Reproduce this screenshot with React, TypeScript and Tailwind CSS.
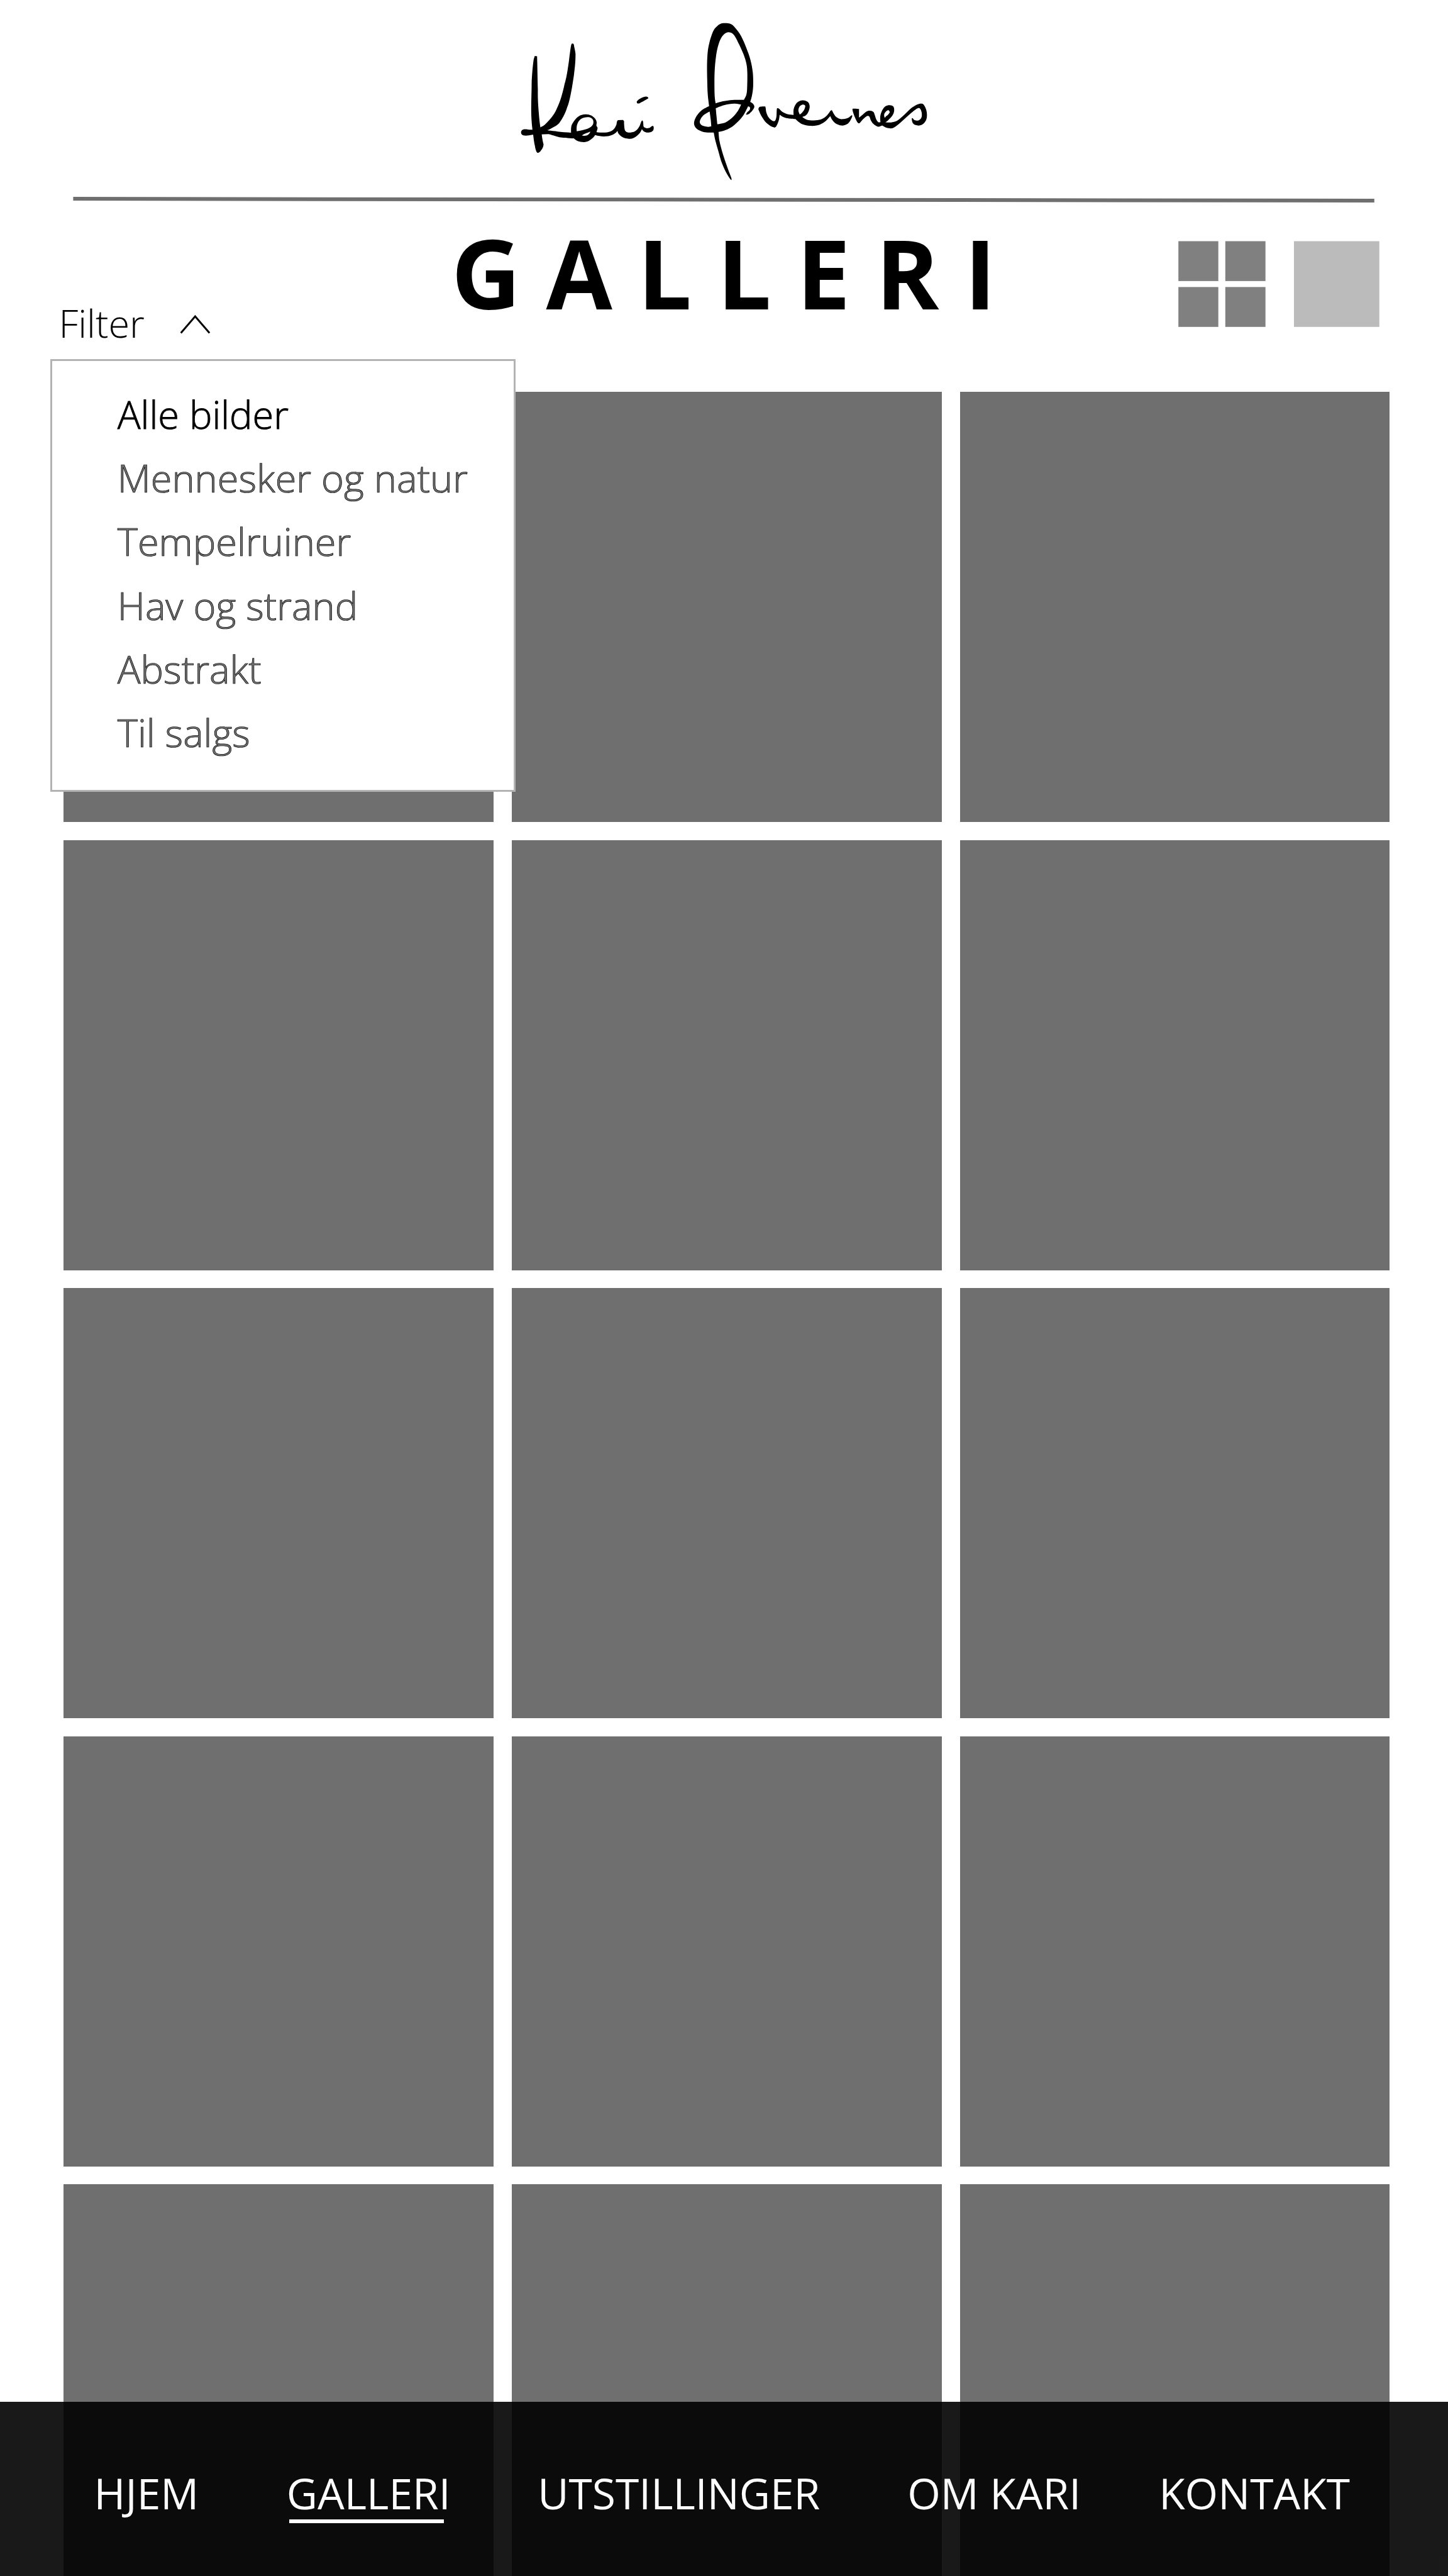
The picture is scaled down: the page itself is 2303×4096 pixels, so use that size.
type Pt = [number, number];

// Smooth closed outline through the points; a repeated point marks a sharp corner.
function outline(pts: Pt[]): string {
  const n = pts.length;
  let d = `M${pts[0][0]} ${pts[0][1]}`;
  for (let i = 0; i < n; i++) {
    const a = pts[(i - 1 + n) % n];
    const p = pts[i];
    const q = pts[(i + 1) % n];
    const b = pts[(i + 2) % n];
    if (p[0] === q[0] && p[1] === q[1]) continue;
    d += `C${p[0] + (q[0] - a[0]) / 6} ${p[1] + (q[1] - a[1]) / 6} ${q[0] - (b[0] - p[0]) / 6} ${q[1] - (b[1] - p[1]) / 6} ${q[0]} ${q[1]}`;
  }
  return d + "Z";
}

const loop: Pt[][] = [
  [[319, 1073], [290, 1022], [265, 958], [248, 893], [230, 822], [220, 768], [220, 768], [185, 768], [150, 761], [120, 743], [105, 710], [118, 665], [150, 624], [193, 597], [193, 597], [185, 520], [182, 430], [181, 330], [185, 245], [195, 185], [207, 140], [225, 97], [255, 67], [285, 60], [322, 67], [350, 97], [380, 145], [410, 220], [434, 297], [448, 380], [450, 470], [443, 530], [433, 570], [433, 570], [450, 583], [457, 603], [445, 627], [425, 648], [408, 653], [408, 653], [415, 638], [430, 622], [431, 605], [420, 600], [420, 600], [395, 653], [360, 699], [320, 736], [280, 756], [248, 764], [248, 764], [253, 820], [265, 875], [280, 930], [303, 1005], [323, 1064]],
  [[231, 579], [231, 579], [225, 520], [225, 380], [234, 270], [248, 198], [270, 145], [300, 120], [335, 133], [367, 195], [395, 265], [411, 325], [416, 380], [415, 480], [410, 525], [396, 557], [396, 557], [330, 558], [280, 565]],
  [[232, 611], [232, 611], [280, 591], [340, 581], [380, 587], [380, 587], [360, 630], [330, 670], [290, 702], [241, 715], [241, 715], [236, 660]],
  [[196, 632], [196, 632], [160, 657], [140, 690], [142, 712], [160, 726], [188, 732], [206, 728], [206, 728], [202, 680]],
];

const verOutline: Pt[][] = [
  [[481, 615], [490, 602], [518, 600], [523, 610], [527, 638], [540, 670], [562, 692], [578, 692], [586, 665], [588, 620], [592, 611], [602, 615], [620, 634], [650, 649], [686, 654], [686, 654], [687, 615], [705, 576], [738, 560], [770, 571], [780, 600], [772, 635], [757, 658], [737, 668], [737, 668], [765, 686], [805, 690], [845, 684], [872, 667], [890, 645], [902, 627], [910, 625], [918, 642], [935, 668], [960, 681], [990, 679], [1010, 670], [1025, 657], [1028, 665], [1015, 695], [995, 716], [965, 723], [930, 708], [910, 684], [900, 662], [900, 662], [880, 687], [855, 708], [820, 723], [780, 725], [740, 716], [715, 699], [697, 681], [697, 681], [660, 678], [630, 670], [605, 653], [605, 653], [600, 688], [588, 722], [578, 735], [560, 731], [525, 703], [500, 665], [485, 630]],
  [[722, 652], [722, 652], [714, 625], [722, 599], [740, 587], [754, 595], [748, 621], [735, 640]],
];

const nesOutline: Pt[][] = [
  [[1030, 622], [1037, 614], [1068, 616], [1068, 616], [1068, 672], [1068, 672], [1090, 652], [1112, 632], [1132, 627], [1152, 635], [1160, 655], [1168, 682], [1180, 701], [1193, 701], [1193, 701], [1192, 663], [1203, 625], [1222, 598], [1247, 591], [1268, 600], [1273, 628], [1262, 660], [1237, 690], [1222, 702], [1222, 702], [1255, 703], [1290, 692], [1320, 666], [1350, 634], [1380, 605], [1410, 586], [1438, 582], [1452, 600], [1463, 635], [1463, 675], [1450, 704], [1425, 722], [1398, 720], [1381, 705], [1376, 680], [1380, 675], [1392, 688], [1415, 690], [1432, 672], [1434, 642], [1425, 615], [1410, 612], [1380, 635], [1340, 674], [1300, 714], [1265, 740], [1230, 738], [1203, 723], [1203, 723], [1180, 731], [1155, 716], [1138, 692], [1128, 665], [1115, 662], [1100, 674], [1085, 690], [1070, 708], [1058, 701], [1042, 665]],
  [[1218, 672], [1215, 650], [1227, 630], [1240, 624], [1247, 637], [1238, 652], [1226, 663]],
];

function Signature() {
  return (
    <svg
      className="block h-[280px] w-[700px] shrink-0"
      viewBox="0 0 2850.5 1140"
      preserveAspectRatio="none"
      role="img"
      aria-label="Kari Øvernes"
    >
      <path d="M165 273L180 275C182 340 183 420 185 490C184 560 188 600 191 640C195 690 198 710 201 732L210 780C213 810 218 830 222 845C221 862 214 875 205 885C198 897 190 901 183 900C175 895 170 880 166 855C160 830 157 800 155 784L150 750C144 700 142 660 142 620C142 560 145 500 145 440C148 380 154 320 158 295Z" />
      <path d="M402 198C405 190 414 191 418 198C421 220 428 240 429 260C429 320 424 350 419 395C412 440 405 490 398 520C390 560 382 590 375 605C362 650 340 685 325 705C305 728 275 738 254 751L205 760L201 735C212 730 220 726 228 720C260 690 290 655 305 620C330 570 345 515 358 455C372 410 380 350 387 300C392 260 397 215 402 198Z" />
      <path d="M92 748C110 745 130 752 150 750L205 738L254 755C290 757 330 766 402 769L420 806C380 806 345 802 325 799C295 792 270 782 254 779L150 783C130 788 110 789 97 788C70 786 70 752 92 748Z" />
      <path
        fillRule="evenodd"
        d="M400 769C399 740 400 720 412 705C430 675 450 660 465 655C490 647 515 649 530 658C555 672 567 690 566 706L564 724L572 738C571 755 563 762 566 766C600 770 635 770 655 761C680 750 690 730 695 712C697 700 697 692 704 688L735 687C742 690 745 695 743 705C745 735 746 750 752 758C762 772 790 770 810 762C835 750 845 725 850 710C855 700 856 690 862 690C868 695 868 710 869 728C875 742 900 744 912 736C921 728 924 724 932 726C938 735 935 742 934 750C928 765 910 769 890 768C872 765 864 755 859 746C852 765 840 780 828 789C810 805 795 810 775 809C745 808 720 795 707 775C702 768 702 760 701 757C690 775 665 787 640 792C610 795 585 794 556 785C548 798 535 812 515 822C500 830 485 831 470 830C445 827 430 818 418 806ZM437 760C432 720 445 695 465 680C485 668 515 665 530 674C548 685 545 700 544 710C540 725 525 737 500 746C480 753 460 756 437 760ZM470 788C485 775 505 771 525 762C522 775 510 785 500 788C490 790 480 790 470 788Z"
      />
      <path d="M826 567C840 548 865 538 885 535C895 535 902 541 900 548C880 560 855 573 842 580C832 582 824 580 826 567Z" />
      <g transform="translate(1080 0) scale(1.1097 1)" fillRule="evenodd">
        <path d={loop.map(outline).join("")} />
        <path d={verOutline.map(outline).join("")} />
        <path d={nesOutline.map(outline).join("")} />
      </g>
    </svg>
  );
}

const categories = ["Alle bilder", "Mennesker og natur", "Tempelruiner", "Hav og strand", "Abstrakt", "Til salgs"];

function FilterMenu() {
  return (
    <ul className="absolute left-[80px] top-[571px] z-10 h-[688px] w-[740px] border-[3px] border-[#b3b3b3] bg-white pl-[103.8px] pt-[34px] text-[61.3px] font-light leading-[101.2px]">
      {categories.map((name, i) => (
        <li
          key={name}
          className={
            i === 0
              ? "whitespace-nowrap text-black [-webkit-text-stroke:0.9px_#000]"
              : "whitespace-nowrap text-[#707070] [-webkit-text-stroke:0.74px_#000]"
          }
        >
          {name}
        </li>
      ))}
    </ul>
  );
}

function ViewToggle() {
  return (
    <div className="mt-[60px] flex gap-[45px]">
      <svg className="block h-[137px] w-[139px]" viewBox="0 0 139 137" fill="#808080">
        <rect x="0.2" y="0.5" width="63.5" height="63.4" />
        <rect x="74.8" y="0.5" width="63.9" height="63.4" />
        <rect x="0.2" y="73.4" width="63.5" height="63.4" />
        <rect x="74.8" y="73.4" width="63.9" height="63.4" />
      </svg>
      <svg className="block h-[137px] w-[136px]" viewBox="0 0 136 137" fill="#bbbbbb">
        <rect x="0" y="0.5" width="135.8" height="136.3" />
      </svg>
    </div>
  );
}

const links = [
  { label: "HJEM", cls: "ml-[149.6px]" },
  { label: "GALLERI", cls: "ml-[139.6px]" },
  { label: "UTSTILLINGER", cls: "ml-[138.5px]" },
  { label: "OM KARI", cls: "ml-[138.9px]" },
  { label: "KONTAKT", cls: "ml-[123.9px]" },
];

export default function App() {
  return (
    <div className="relative flex h-[4096px] w-[2303px] flex-col overflow-hidden bg-white font-['Open_Sans',sans-serif] text-black">
      <header className="flex h-[312px] shrink-0 pl-[810.4px] pt-[22.1px]">
        <Signature />
      </header>
      <svg className="ml-[116px] block h-[11px] w-[2071px] shrink-0" viewBox="0 0 2071 11" fill="#6f6f6f">
        <path d="M0.4 1.1L2069.8 4V10L0.4 7.1Z" />
      </svg>
      <div className="flex h-[300.4px] shrink-0">
        <div className="flex w-[717.7px] pl-[93.4px] pt-[148px]">
          <span className="text-[61.3px] font-light leading-[84px]">Filter</span>
          <svg className="ml-14 mt-[28px] block h-[34px] w-[50px]" viewBox="0 0 50 34" fill="none" stroke="#000" strokeWidth="3">
            <path d="M1.7 30.4L24.4 4.1L47.2 30.4" />
          </svg>
        </div>
        <h1 className="mt-[6px] w-[1156.3px] whitespace-nowrap text-[152.7px] font-bold leading-[208px] tracking-[40.2px]">GALLERI</h1>
        <ViewToggle />
      </div>
      <main className="ml-[100.9px] grid w-[2109.5px] shrink-0 grid-cols-3 gap-x-[29px] gap-y-[28.8px]">
        {Array.from({ length: 15 }, (_, i) => (
          <div key={i} className="h-[683.7px] bg-[#6f6f6f]" />
        ))}
      </main>
      <FilterMenu />
      <nav className="absolute inset-x-0 bottom-0 z-10 flex h-[277px] bg-black/90 pt-[99px] text-[67.7px] leading-[92px] text-white">
        {links.map(({ label, cls }) => (
          <a key={label} className={`${cls} relative whitespace-nowrap`}>
            {label}
            {label === "GALLERI" && <span className="absolute left-[4.6px] top-[88px] h-[6px] w-[246px] bg-white" />}
          </a>
        ))}
      </nav>
    </div>
  );
}
